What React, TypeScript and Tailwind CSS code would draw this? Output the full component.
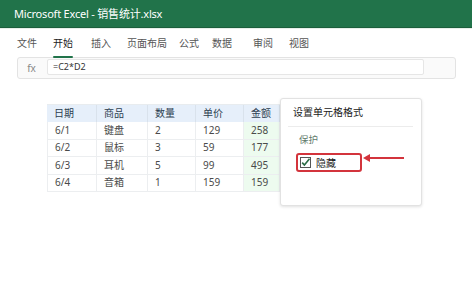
import React from "react";

const font = { fontFamily: '"Noto Sans", "Noto Sans CJK SC", sans-serif' };

const rows = [
  ["6/1", "键盘", "2", "129", "258"],
  ["6/2", "鼠标", "3", "59", "177"],
  ["6/3", "耳机", "5", "99", "495"],
  ["6/4", "音箱", "1", "159", "159"],
];

const menus = ["文件", "开始", "插入", "页面布局", "公式", "数据", "审阅", "视图"];
const menuX = [17, 53, 91, 127, 179, 212, 253, 289];

export default function App() {
  return (
    <div className="w-[472px] h-[288px] bg-white overflow-hidden relative" style={font}>
      {/* Title bar */}
      <div className="h-[28px] bg-[#21734a] border-b border-[#1b5e3b] flex items-center pl-[14px]">
        <span className="text-white text-[11px] leading-none tracking-[-0.2px]">Microsoft Excel - 销售统计.xlsx</span>
      </div>
      <div className="h-px bg-[#e6efe9]" />
      {/* Menu */}
      <div className="relative h-[27px]">
        {menus.map((m, i) => (
          <span
            key={m}
            className={`absolute top-[7px] text-[10px] leading-[14px] ${i === 1 ? "text-[#222]" : "text-[#555]"}`}
            style={{ left: menuX[i] }}
          >
            {m}
            {i === 1 && <span className="absolute left-0 right-0 top-[21px] -mt-[1px] h-[2px] bg-[#21734a] rounded" />}
          </span>
        ))}
      </div>
      {/* Formula bar */}
      <div className="ml-[17px] w-[439px] h-[22px] mt-[1px] border border-[#e3e3e3] rounded-[3px] flex items-center bg-[#fafafa]">
        <span className="w-[29px] text-center text-[10px] text-[#888] pr-[2px]">fx</span>
        <div className="w-[377px] h-[16px] bg-white border border-[#e6e6e6] rounded-[2px] flex items-center pl-[5px] -mt-[2px]">
          <span className="text-[9px] text-[#333]">=C2*D2</span>
        </div>
      </div>
      {/* Table */}
      <div className="ml-[47px] mt-[25px] w-[233px] text-[10px]">
        <div className="grid grid-cols-[50px_51px_48px_48px_36px] h-[18px] bg-[#e6effa] text-[#2c3e50] border-t border-[#e8ecef]">
          {["日期", "商品", "数量", "单价", "金额"].map((h) => (
            <div key={h} className="flex items-center pl-[7px] border-r border-[#d9e2ec]">{h}</div>
          ))}
        </div>
        {rows.map((r) => (
          <div key={r[0]} className="grid grid-cols-[50px_51px_48px_48px_36px] h-[17.5px] text-[#4a4a4a] border-b border-[#eceef0]">
            {r.map((c, i) => (
              <div
                key={i}
                className={`flex items-center pl-[7px] border-r border-[#eceef0] ${i === 0 ? "border-l" : ""} ${i === 4 ? "bg-[#edfbef]" : "bg-white"}`}
              >
                {c}
              </div>
            ))}
          </div>
        ))}
      </div>
      {/* Dialog */}
      <div className="absolute left-[280px] top-[98px] w-[142px] h-[108px] bg-white border border-[#e2e2e2] rounded-[3px] shadow-[0_1px_3px_rgba(0,0,0,0.12)]">
        <div className="pl-[12px] pt-[6px] text-[10px] text-[#222] leading-[14px]">设置单元格格式</div>
        <div className="mt-[7px] ml-[7px] mr-[8px] h-px bg-[#ececec]" />
        <div className="pl-[18px] pt-[7px] text-[9.5px] text-[#5f7a6c] leading-[12px]">保护</div>
        <div className="ml-[15px] mt-[7px] w-[66px] h-[19px] border-2 border-[#d3343c] rounded-[3px] flex items-center pl-[2px] gap-[5px]">
          <svg width="11" height="11" viewBox="0 0 11 11">
            <rect x="0.5" y="0.5" width="10" height="10" fill="white" stroke="#555" strokeWidth="1" />
            <path d="M2.2 5.6 L4.4 8 L9.5 1.8" fill="none" stroke="#2a6b45" strokeWidth="1.6" />
          </svg>
          <span className="text-[10px] text-[#222] leading-none">隐藏</span>
        </div>
      </div>
      {/* Arrow */}
      <svg className="absolute left-[362px] top-[153px]" width="44" height="10" viewBox="0 0 44 10">
        <line x1="6" y1="5" x2="42" y2="5" stroke="#d3343c" strokeWidth="2" />
        <path d="M1 5 L8 1 L8 9 Z" fill="#d3343c" />
      </svg>
    </div>
  );
}
